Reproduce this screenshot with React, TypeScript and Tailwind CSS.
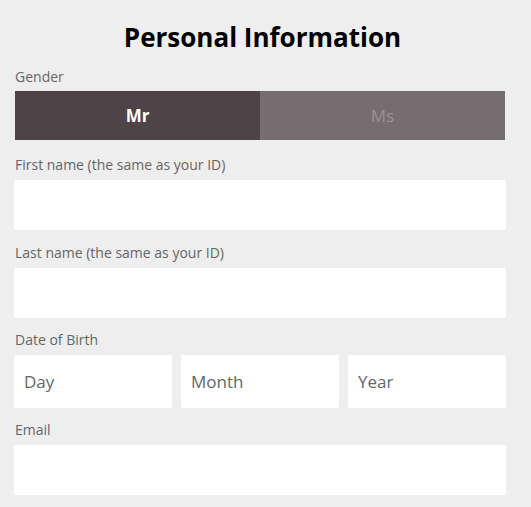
import { useState } from "react";

const font = { fontFamily: "'Open Sans', 'Noto Sans', sans-serif" };

function Field({ label }: { label: string }) {
    return (
        <div className="flex flex-col">
            <label className="text-[14px] leading-[16px] text-[#666666] ml-[1px] mb-[7px]">
                {label}
            </label>
            <input className="h-[50px] w-full bg-white rounded-[2px] outline-none px-[10px]" />
        </div>
    );
}

export default function App() {
    const [gender, setGender] = useState("Mr");

    return (
        <div className="w-[531px] h-[507px] bg-[#eeeeee] px-[14px] pt-[20px]" style={font}>
            <h1 className="text-center text-[26px] font-bold leading-[34px] text-black ml-[-6px]">
                Personal Information
            </h1>

            <div className="mt-[15px] text-[14px] leading-[16px] text-[#666666] ml-[1px]">Gender</div>
            <div className="mt-[6px] ml-[1px] mr-[12px] flex h-[49px]">
                {["Mr", "Ms"].map((g) => (
                    <button
                        key={g}
                        onClick={() => setGender(g)}
                        className={
                            gender === g
                                ? "flex-1 bg-[#4e4448] text-white font-bold text-[17px]"
                                : "flex-1 bg-[#756d70] text-[#9a9396] text-[17px]"
                        }
                    >
                        {g}
                    </button>
                ))}
            </div>

            <div className="mt-[17px] mr-[11px] flex flex-col gap-[15px]">
                <Field label="First name (the same as your ID)" />
                <Field label="Last name (the same as your ID)" />
            </div>

            <div className="mt-[14px] mr-[11px]">
                <div className="text-[14px] leading-[16px] text-[#666666] ml-[1px] mb-[7px]">Date of Birth</div>
                <div className="grid grid-cols-3 gap-[9px]">
                    {["Day", "Month", "Year"].map((p) => (
                        <input
                            key={p}
                            placeholder={p}
                            className="h-[53px] w-full bg-white rounded-[2px] outline-none px-[10px] text-[17px] text-[#555555] placeholder:text-[#666666]"
                        />
                    ))}
                </div>
            </div>

            <div className="mt-[14px] mr-[11px]">
                <Field label="Email" />
            </div>
        </div>
    );
}
